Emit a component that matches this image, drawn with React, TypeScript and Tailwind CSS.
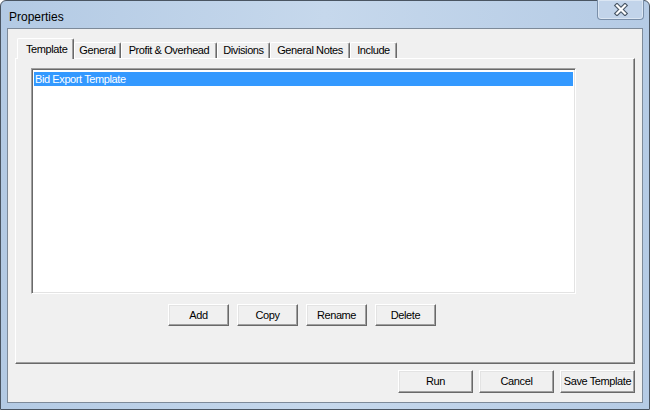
import React from 'react';

const tabs = [
  { label: 'General', w: 'w-[47px]' },
  { label: 'Profit & Overhead', w: 'w-[96px]' },
  { label: 'Divisions', w: 'w-[53px]' },
  { label: 'General Notes', w: 'w-[80px]' },
  { label: 'Include', w: 'w-[47px]' },
];

function ClassicButton({ label, className }: { label: string; className: string }) {
  return (
    <button
      className={`${className} flex items-center justify-center bg-[#f0f0f0] border border-t-white border-l-white border-r-[#696969] border-b-[#696969] shadow-[inset_-1px_-1px_0_#a0a0a0,inset_1px_1px_0_#e3e3e3] text-black`}
    >
      {label}
    </button>
  );
}

export default function App() {
  return (
    <div
      className="w-[650px] h-[410px] flex flex-col px-[6px] pb-[6px] border border-[#4a5562] rounded-t-[6px] bg-gradient-to-r from-[#b3cae4] via-[#c6d8ec] to-[#b5cbe5] text-[11px] tracking-[-0.4px] text-black"
      style={{ fontFamily: '"Liberation Sans", Arial, sans-serif' }}
    >
      {/* Title bar */}
      <div className="h-[27px] flex items-start justify-between">
        <div className="pt-[7px] pl-[2px] text-[12px] tracking-normal">Properties</div>
        <div className="-mt-px -mr-[1px] w-[47px] h-[20px] flex items-center justify-center rounded-b-[4px] border border-t-0 border-[#7a8fa9] bg-[#c2d4ea] shadow-[inset_0_0_0_1px_#dbe6f3]">
          <svg width="16" height="13" viewBox="0 0 16 13">
            <path d="M4 2.5 L12 10.5 M12 2.5 L4 10.5" stroke="#4b5968" strokeWidth="4.5" strokeLinecap="square" />
            <path d="M4 2.5 L12 10.5 M12 2.5 L4 10.5" stroke="#ffffff" strokeWidth="2.2" strokeLinecap="square" />
          </svg>
        </div>
      </div>

      {/* Client area */}
      <div className="flex-1 flex flex-col bg-[#f0f0f0] border border-[#7d8a99] px-[7px] pt-[9px]">
        {/* Tab strip */}
        <div className="h-[20px] flex items-end pl-[2px]">
          <div className="relative z-10 -mb-px w-[57px] h-[21px] flex items-start pt-[2px] pl-[8px] bg-[#f0f0f0] border-t border-l border-white border-r border-r-[#696969] rounded-t-[2px] shadow-[inset_-1px_0_0_#a0a0a0]">
            Template
          </div>
          {tabs.map((t) => (
            <div
              key={t.label}
              className={`${t.w} h-[16px] flex items-center justify-center bg-[#f0f0f0] border-t border-l border-white border-r border-r-[#696969] rounded-t-[2px] shadow-[inset_-1px_0_0_#a0a0a0]`}
            >
              {t.label}
            </div>
          ))}
        </div>

        {/* Tab page */}
        <div className="h-[306px] flex flex-col border border-t-white border-l-white border-r-[#696969] border-b-[#696969] shadow-[inset_-1px_-1px_0_#a0a0a0] pl-[15px] pt-[9px]">
          <div className="w-[545px] h-[226px] bg-white border border-t-[#a0a0a0] border-l-[#a0a0a0] border-r-white border-b-white shadow-[inset_1px_1px_0_#696969,inset_-1px_-1px_0_#e3e3e3] pt-[2px] px-[1px]">
            <div className="h-[14px] mt-[1px] mx-[1px] bg-[#3399ff] text-white flex items-center pl-[1px]">
              Bid Export Template
            </div>
          </div>
          <div className="w-[545px] mt-[10px] flex justify-center gap-[8px] pr-[3px]">
            <ClassicButton label="Add" className="w-[61px] h-[22px]" />
            <ClassicButton label="Copy" className="w-[61px] h-[22px]" />
            <ClassicButton label="Rename" className="w-[61px] h-[22px]" />
            <ClassicButton label="Delete" className="w-[61px] h-[22px]" />
          </div>
        </div>

        {/* Dialog buttons */}
        <div className="mt-[6px] flex justify-end gap-[6px]">
          <ClassicButton label="Run" className="w-[75px] h-[23px]" />
          <ClassicButton label="Cancel" className="w-[75px] h-[23px]" />
          <ClassicButton label="Save Template" className="w-[75px] h-[23px]" />
        </div>
      </div>
    </div>
  );
}
